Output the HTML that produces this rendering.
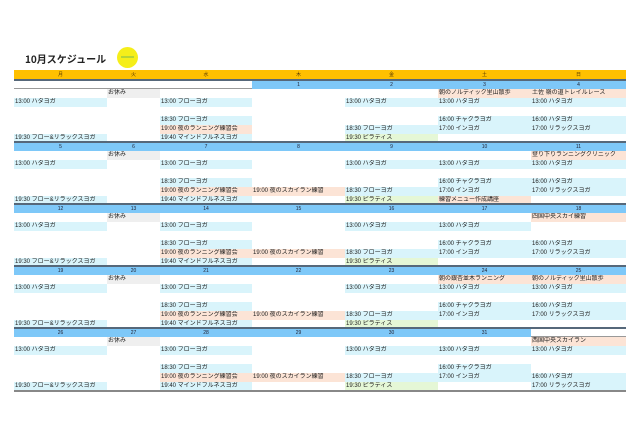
<!DOCTYPE html>
<html><head><meta charset="utf-8"><style>
*{margin:0;padding:0;box-sizing:border-box}
body{width:640px;height:442px;background:#fff;position:relative;overflow:hidden;font-family:"Liberation Sans","Noto Sans CJK JP",sans-serif;color:#333}
.title{position:absolute;left:25px;top:51px;font-size:10px;font-weight:bold;color:#222;font-family:"Noto Sans CJK JP",sans-serif}
.logo{position:absolute;left:117px;top:47px;width:21px;height:21px;border-radius:50%;background:#f5ee1a}
.logo span{position:absolute;left:4px;top:9px;width:13px;height:2px;background:#8bc34a;opacity:.6}
.hdr{position:absolute;left:14px;top:70px;width:612px;height:10px;background:#ffc000;display:grid;grid-template-columns:93px 53px 92px 93px 93px 93px 95px}
.hdr div{font-size:5px;text-align:center;line-height:10px;color:#5a3a00}
.wk{position:absolute;left:14px;width:612px;height:62px;display:grid;grid-template-columns:93px 53px 92px 93px 93px 93px 95px;grid-template-rows:8px repeat(6,9px)}
.line{position:absolute;left:14px;width:612px;height:2px;background:#56687a}
.d{background:#7ec8f8;text-align:center;font-size:5px;line-height:8px;color:#223}
.wk div:not(.d){font-size:6px;line-height:9px;padding-left:1px;white-space:nowrap;overflow:hidden;color:#222}
.b{background:#d9f4fb}.p{background:#fce4d6}.g{background:#e5f7d6}.o{background:#efefef}
</style></head><body>
<div class="title">10月スケジュール</div>
<div class="logo"><span></span></div>
<div class="hdr"><div>月</div><div>火</div><div>水</div><div>木</div><div>金</div><div>土</div><div>日</div></div>

<div class="line" style="top:79px"></div>
<div class="wk" style="top:81px">
<div style="grid-area:1/1/2/4;border-bottom:1px solid #999"></div>
<div class="d" style="grid-area:1/4">1</div><div class="d" style="grid-area:1/5">2</div><div class="d" style="grid-area:1/6">3</div><div class="d" style="grid-area:1/7">4</div>
<div class="o" style="grid-area:2/2">お休み</div>
<div class="p" style="grid-area:2/6">朝のノルディック里山散歩</div>
<div class="p" style="grid-area:2/7">土佐 嶺の道トレイルレース</div>
<div class="b" style="grid-area:3/1">13:00 ハタヨガ</div>
<div class="b" style="grid-area:3/3">13:00 フローヨガ</div>
<div class="b" style="grid-area:3/5">13:00 ハタヨガ</div>
<div class="b" style="grid-area:3/6">13:00 ハタヨガ</div>
<div class="b" style="grid-area:3/7">13:00 ハタヨガ</div>
<div class="b" style="grid-area:5/3">18:30 フローヨガ</div>
<div class="b" style="grid-area:5/6">16:00 チャクラヨガ</div>
<div class="b" style="grid-area:5/7">16:00 ハタヨガ</div>
<div class="p" style="grid-area:6/3">19:00 夜のランニング練習会</div>
<div class="b" style="grid-area:6/5">18:30 フローヨガ</div>
<div class="b" style="grid-area:6/6">17:00 インヨガ</div>
<div class="b" style="grid-area:6/7">17:00 リラックスヨガ</div>
<div class="b" style="grid-area:7/1">19:30 フロー&amp;リラックスヨガ</div>
<div class="b" style="grid-area:7/3">19:40 マインドフルネスヨガ</div>
<div class="g" style="grid-area:7/5">19:30 ピラティス</div>
</div>

<div class="line" style="top:141px"></div>
<div class="wk" style="top:143px">
<div class="d">5</div><div class="d">6</div><div class="d">7</div><div class="d">8</div><div class="d">9</div><div class="d">10</div><div class="d">11</div>
<div class="o" style="grid-area:2/2">お休み</div>
<div class="p" style="grid-area:2/7">登り下りランニングクリニック</div>
<div class="b" style="grid-area:3/1">13:00 ハタヨガ</div>
<div class="b" style="grid-area:3/3">13:00 フローヨガ</div>
<div class="b" style="grid-area:3/5">13:00 ハタヨガ</div>
<div class="b" style="grid-area:3/6">13:00 ハタヨガ</div>
<div class="b" style="grid-area:3/7">13:00 ハタヨガ</div>
<div class="b" style="grid-area:5/3">18:30 フローヨガ</div>
<div class="b" style="grid-area:5/6">16:00 チャクラヨガ</div>
<div class="b" style="grid-area:5/7">16:00 ハタヨガ</div>
<div class="p" style="grid-area:6/3">19:00 夜のランニング練習会</div>
<div class="p" style="grid-area:6/4">19:00 夜のスカイラン練習</div>
<div class="b" style="grid-area:6/5">18:30 フローヨガ</div>
<div class="b" style="grid-area:6/6">17:00 インヨガ</div>
<div class="b" style="grid-area:6/7">17:00 リラックスヨガ</div>
<div class="b" style="grid-area:7/1">19:30 フロー&amp;リラックスヨガ</div>
<div class="b" style="grid-area:7/3">19:40 マインドフルネスヨガ</div>
<div class="g" style="grid-area:7/5">19:30 ピラティス</div>
<div class="p" style="grid-area:7/6">練習メニュー作成講座</div>
</div>

<div class="line" style="top:203px"></div>
<div class="wk" style="top:205px">
<div class="d">12</div><div class="d">13</div><div class="d">14</div><div class="d">15</div><div class="d">16</div><div class="d">17</div><div class="d">18</div>
<div class="o" style="grid-area:2/2">お休み</div>
<div class="p" style="grid-area:2/7">四国中央スカイ練習</div>
<div class="b" style="grid-area:3/1">13:00 ハタヨガ</div>
<div class="b" style="grid-area:3/3">13:00 フローヨガ</div>
<div class="b" style="grid-area:3/5">13:00 ハタヨガ</div>
<div class="b" style="grid-area:3/6">13:00 ハタヨガ</div>
<div class="b" style="grid-area:5/3">18:30 フローヨガ</div>
<div class="b" style="grid-area:5/6">16:00 チャクラヨガ</div>
<div class="b" style="grid-area:5/7">16:00 ハタヨガ</div>
<div class="p" style="grid-area:6/3">19:00 夜のランニング練習会</div>
<div class="p" style="grid-area:6/4">19:00 夜のスカイラン練習</div>
<div class="b" style="grid-area:6/5">18:30 フローヨガ</div>
<div class="b" style="grid-area:6/6">17:00 インヨガ</div>
<div class="b" style="grid-area:6/7">17:00 リラックスヨガ</div>
<div class="b" style="grid-area:7/1">19:30 フロー&amp;リラックスヨガ</div>
<div class="b" style="grid-area:7/3">19:40 マインドフルネスヨガ</div>
<div class="g" style="grid-area:7/5">19:30 ピラティス</div>
</div>

<div class="line" style="top:265px"></div>
<div class="wk" style="top:267px">
<div class="d">19</div><div class="d">20</div><div class="d">21</div><div class="d">22</div><div class="d">23</div><div class="d">24</div><div class="d">25</div>
<div class="o" style="grid-area:2/2">お休み</div>
<div class="p" style="grid-area:2/6">朝の銀杏並木ランニング</div>
<div class="p" style="grid-area:2/7">朝のノルディック里山散歩</div>
<div class="b" style="grid-area:3/1">13:00 ハタヨガ</div>
<div class="b" style="grid-area:3/3">13:00 フローヨガ</div>
<div class="b" style="grid-area:3/5">13:00 ハタヨガ</div>
<div class="b" style="grid-area:3/6">13:00 ハタヨガ</div>
<div class="b" style="grid-area:3/7">13:00 ハタヨガ</div>
<div class="b" style="grid-area:5/3">18:30 フローヨガ</div>
<div class="b" style="grid-area:5/6">16:00 チャクラヨガ</div>
<div class="b" style="grid-area:5/7">16:00 ハタヨガ</div>
<div class="p" style="grid-area:6/3">19:00 夜のランニング練習会</div>
<div class="p" style="grid-area:6/4">19:00 夜のスカイラン練習</div>
<div class="b" style="grid-area:6/5">18:30 フローヨガ</div>
<div class="b" style="grid-area:6/6">17:00 インヨガ</div>
<div class="b" style="grid-area:6/7">17:00 リラックスヨガ</div>
<div class="b" style="grid-area:7/1">19:30 フロー&amp;リラックスヨガ</div>
<div class="b" style="grid-area:7/3">19:40 マインドフルネスヨガ</div>
<div class="g" style="grid-area:7/5">19:30 ピラティス</div>
</div>

<div class="line" style="top:327px"></div>
<div class="wk" style="top:329px">
<div class="d">26</div><div class="d">27</div><div class="d">28</div><div class="d">29</div><div class="d">30</div><div class="d">31</div><div style="grid-area:1/7;border-bottom:1px solid #999"></div>
<div class="o" style="grid-area:2/2">お休み</div>
<div class="p" style="grid-area:2/7">西国中央スカイラン</div>
<div class="b" style="grid-area:3/1">13:00 ハタヨガ</div>
<div class="b" style="grid-area:3/3">13:00 フローヨガ</div>
<div class="b" style="grid-area:3/5">13:00 ハタヨガ</div>
<div class="b" style="grid-area:3/6">13:00 ハタヨガ</div>
<div class="b" style="grid-area:3/7">13:00 ハタヨガ</div>
<div class="b" style="grid-area:5/3">18:30 フローヨガ</div>
<div class="b" style="grid-area:5/6">16:00 チャクラヨガ</div>
<div class="p" style="grid-area:6/3">19:00 夜のランニング練習会</div>
<div class="p" style="grid-area:6/4">19:00 夜のスカイラン練習</div>
<div class="b" style="grid-area:6/5">18:30 フローヨガ</div>
<div class="b" style="grid-area:6/6">17:00 インヨガ</div>
<div class="b" style="grid-area:6/7">16:00 ハタヨガ</div>
<div class="b" style="grid-area:7/1">19:30 フロー&amp;リラックスヨガ</div>
<div class="b" style="grid-area:7/3">19:40 マインドフルネスヨガ</div>
<div class="g" style="grid-area:7/5">19:30 ピラティス</div>
<div class="b" style="grid-area:7/7">17:00 リラックスヨガ</div>
</div>
<div class="line" style="top:390px;background:#888"></div>
</body></html>
